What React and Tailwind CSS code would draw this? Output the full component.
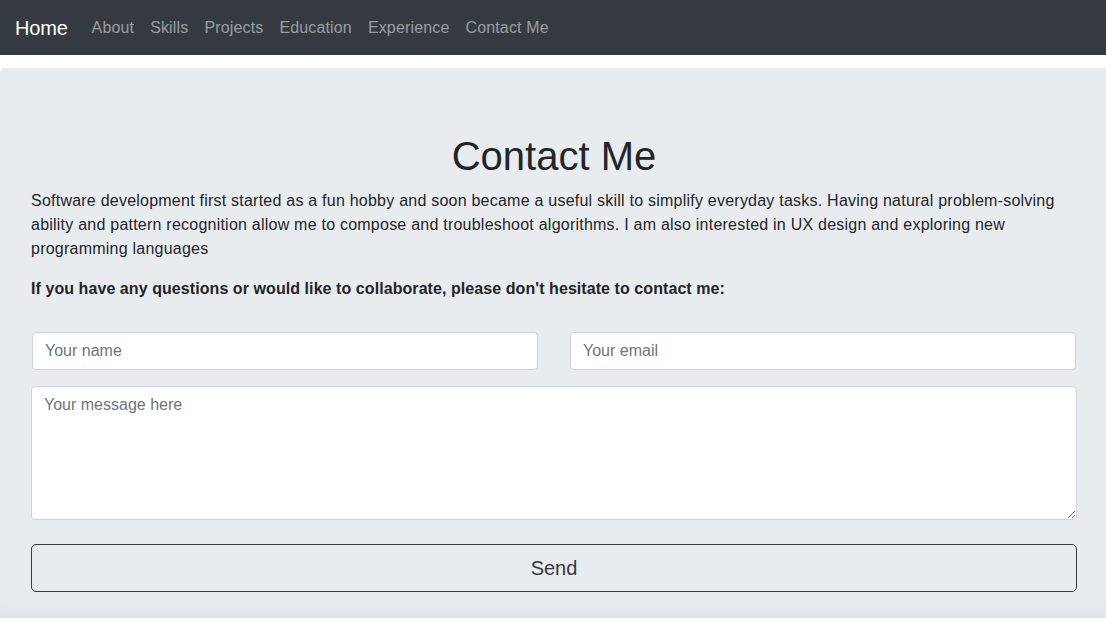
export default function App() {
  const links = ['About', 'Skills', 'Projects', 'Education', 'Experience', 'Contact Me'];

  return (
    <div className="min-h-[618px] overflow-hidden bg-white text-[#212529]" style={{ fontFamily: '"Liberation Sans", Arial, sans-serif' }}>
      {/* Navbar */}
      <nav className="flex h-[55px] items-center bg-[#343a40] px-[15px]">
        <a className="mr-4 text-[20px] leading-[30px] tracking-[-0.2px] text-white">Home</a>
        <div className="flex">
          {links.map((l) => (
            <a key={l} className="px-2 text-[16px] leading-6 tracking-[0.15px] text-white/50">
              {l}
            </a>
          ))}
        </div>
      </nav>

      {/* Jumbotron */}
      <section className="mt-[13px] h-[550px] rounded-tl-[5px] bg-[#e9ecef] pl-[31px] pr-[29px] pt-16 shadow-[inset_0_-22px_20px_-18px_rgba(0,0,0,0.05)]">
        <h1 className="mb-2 text-center text-[40px] font-medium leading-[48px]">Contact Me</h1>
        <p className="mb-4 pt-px text-[16px] leading-6 tracking-[0.23px]">
          Software development first started as a fun hobby and soon became a useful skill to simplify everyday tasks.
          Having natural problem-solving ability and pattern recognition allow me to compose and troubleshoot
          algorithms. I am also interested in UX design and exploring new programming languages
        </p>
        <p className="mb-4 text-[16px] font-bold leading-6 tracking-[0.07px]">
          If you have any questions or would like to collaborate, please don't hesitate to contact me:
        </p>

        <form className="flex flex-col pt-[15px]" onSubmit={(e) => e.preventDefault()}>
          <div className="grid grid-cols-2 gap-8 px-px">
            <input
              type="text"
              placeholder="Your name"
              className="h-[38px] rounded-[4px] border border-[#ced4da] bg-white px-3 text-[16px] text-[#495057] placeholder:text-[#6c757d] outline-none"
            />
            <input
              type="email"
              placeholder="Your email"
              className="h-[38px] rounded-[4px] border border-[#ced4da] bg-white px-3 text-[16px] text-[#495057] placeholder:text-[#6c757d] outline-none"
            />
          </div>
          <textarea
            placeholder="Your message here"
            className="mt-4 h-[134px] rounded-[4px] border border-[#ced4da] bg-white px-3 py-[6px] text-[16px] leading-6 text-[#495057] placeholder:text-[#6c757d] outline-none"
          />
          <button
            type="submit"
            className="mt-6 h-[48px] rounded-[5px] border border-[#343a40] text-[20px] text-[#343a40]"
          >
            Send
          </button>
        </form>
      </section>
    </div>
  );
}
